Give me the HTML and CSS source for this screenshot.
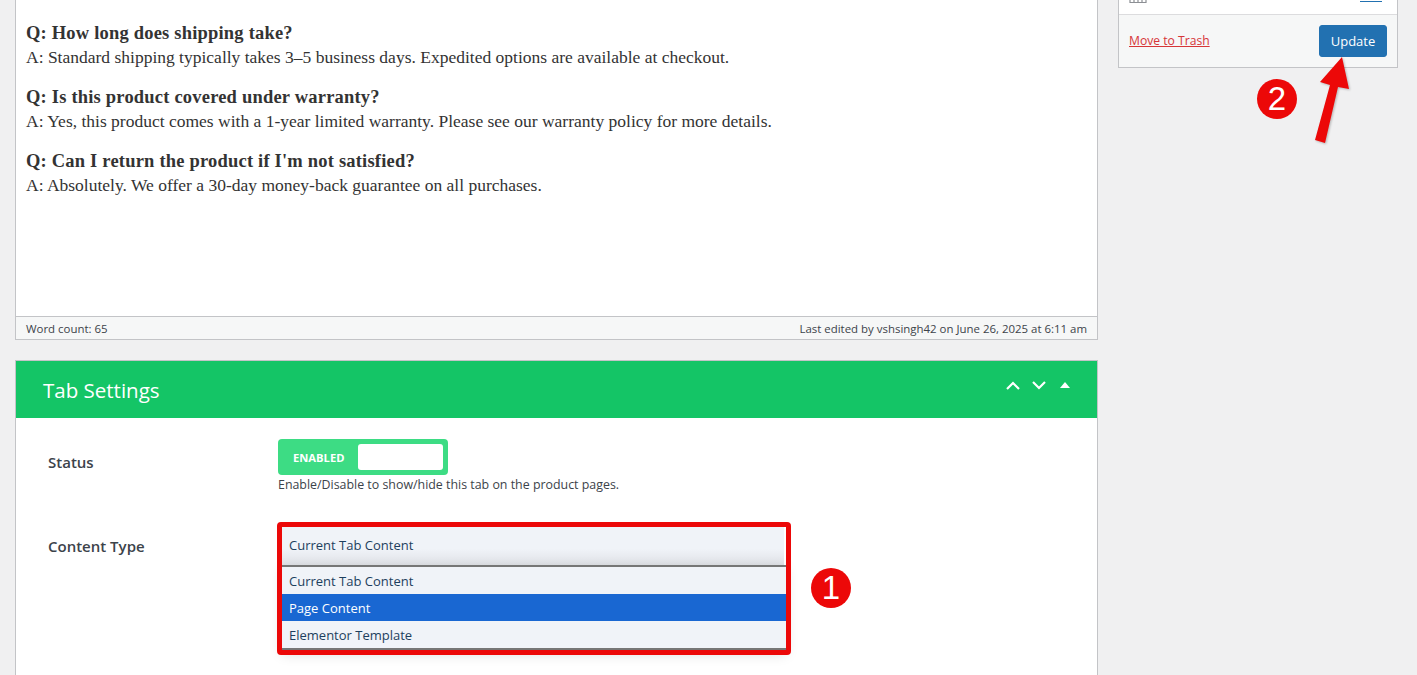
FILE: index.html
```html
<!DOCTYPE html>
<html lang="en">
<head>
<meta charset="utf-8">
<title>Tab Settings</title>
<link rel="stylesheet" href="styles.css">
</head>
<body>
<div class="page">
  <main class="main">
    <section class="editor">
      <div class="editor-content">
        <p class="qa"><strong>Q: How long does shipping take?</strong>A: Standard shipping typically takes 3–5 business days. Expedited options are available at checkout.</p>
        <p class="qa"><strong>Q: Is this product covered under warranty?</strong>A: Yes, this product comes with a 1-year limited warranty. Please see our warranty policy for more details.</p>
        <p class="qa"><strong>Q: Can I return the product if I'm not satisfied?</strong>A: Absolutely. We offer a 30-day money-back guarantee on all purchases.</p>
      </div>
      <div class="status-bar">
        <span>Word count: 65</span>
        <span>Last edited by vshsingh42 on June 26, 2025 at 6:11 am</span>
      </div>
    </section>
    <section class="settings">
      <header class="settings-head">
        <h2>Tab Settings</h2>
        <div class="head-icons">
          <svg width="14" height="9" viewBox="0 0 14 9"><path d="M1 8l6-6 6 6" fill="none" stroke="#fff" stroke-width="2.2"/></svg>
          <svg width="14" height="9" viewBox="0 0 14 9"><path d="M1 1l6 6 6-6" fill="none" stroke="#fff" stroke-width="2.2"/></svg>
          <svg class="head-tri" width="10" height="6" viewBox="0 0 10 6"><path d="M5 0l5 6H0z" fill="#fff"/></svg>
        </div>
      </header>
      <div class="row row-status">
        <div class="label">Status</div>
        <div class="field">
          <div class="toggle"><span class="toggle-text">ENABLED</span><span class="knob"></span></div>
          <p class="help">Enable/Disable to show/hide this tab on the product pages.</p>
        </div>
      </div>
      <div class="row row-type">
        <div class="label">Content Type</div>
        <div class="field">
          <div class="select-current">Current Tab Content</div>
        </div>
      </div>
    </section>
  </main>
  <aside class="side">
    <div class="publish">
      <div class="publish-top">
        <svg class="cal" width="18" height="3" viewBox="0 0 18 3"><path d="M1 0v2.500h16V0M5 0v2M9 0v2M13 0v2" fill="none" stroke="#8c8f94" stroke-width="1.2"/></svg>
        <span class="edit-line"></span>
      </div>
      <div class="publish-actions">
        <a class="trash" href="#">Move to Trash</a>
        <button class="update" type="button">Update</button>
      </div>
    </div>
  </aside>
</div>

<div class="dropdown">
  <div class="opt">Current Tab Content</div>
  <div class="opt opt-active">Page Content</div>
  <div class="opt">Elementor Template</div>
</div>
<div class="red-box"></div>
<div class="badge badge-one">1</div>
<div class="badge badge-two">2</div>
<svg class="arrow" width="40" height="92" viewBox="0 0 40 92">
  <path d="M30 2L8 27 18 30 3 85 13 88 26 32 37 34z" fill="#ec0808"/>
</svg>
</body>
</html>
```

FILE: styles.css
```css
* { box-sizing: border-box; }
html, body { margin: 0; height: 675px; overflow: hidden; }
body {
  background: #f0f0f1;
  color: #3c434a;
  font-family: "Open Sans", "Noto Sans", sans-serif;
  font-size: 13px;
  position: relative;
}
.page { display: flex; gap: 20px; padding-left: 15px; align-items: flex-start; height: 675px; overflow: hidden; }
.main { width: 1083px; display: flex; flex-direction: column; gap: 20px; }
.side { width: 280px; }

.editor { background: #fff; border: 1px solid #c3c4c7; border-top: 0; }
.editor-content {
  height: 316px;
  padding: 21px 10px 0;
  font-family: "Liberation Serif", serif;
  font-size: 17.5px;
  line-height: 24px;
  color: #333;
}
.editor-content strong { display: block; font-size: 18.5px; letter-spacing: .2px; }
.qa { margin: 0 0 16px; }
.status-bar {
  height: 23px;
  display: flex;
  justify-content: space-between;
  align-items: center;
  padding: 0 10px;
  background: #f6f7f7;
  border-top: 1px solid #c3c4c7;
  font-size: 11.45px;
  color: #3c434a;
}

.settings { background: #fff; border: 1px solid #c3c4c7; height: 400px; }
.settings-head {
  height: 57px;
  background: #14c566;
  display: flex;
  justify-content: space-between;
  align-items: center;
  padding: 0 27px;
  color: #fff;
}
.settings-head h2 { margin: 0; font-size: 20.5px; font-weight: 400; }
.head-icons { display: flex; align-items: center; gap: 12px; margin-top: -8px; }
.head-tri { margin-left: 2px; margin-top: -2px; }
.row { display: flex; padding-left: 32px; }
.row-status { padding-top: 21px; height: 105px; }
.label { width: 230px; font-size: 15px; font-weight: 600; color: #3c434a; padding-top: 13px; }
.toggle {
  width: 170px;
  height: 36px;
  background: #3ddc84;
  border-radius: 4px;
  display: flex;
  align-items: center;
  padding: 0 5px 0 15px;
  justify-content: space-between;
}
.toggle-text { color: #fff; font-size: 11.2px; font-weight: 700; }
.knob { width: 85px; height: 26px; background: #fff; border-radius: 3px; }
.help { margin: 1px 0 0; font-size: 12.4px; line-height: 18px; color: #3c434a; }
.select-current {
  width: 506px;
  height: 43px;
  background: linear-gradient(#f0f3f8 60%, #dfe1e6);
  color: #1d3f5e;
  font-size: 13px;
  padding: 13px 11px 0;
}

.dropdown {
  position: absolute;
  left: 282px;
  top: 565px;
  width: 504px;
  height: 85px;
  background: #f0f3f8;
  border-top: 2px solid #767676;
  border-bottom: 2px solid #767676;
  box-shadow: 0 4px 12px rgba(0,0,0,.15);
}
.opt { height: 27px; padding: 1px 7px 0; line-height: 27px; color: #1d3f5e; font-size: 13px; }
.opt-active { background: #1967d2; color: #fff; }
.red-box {
  position: absolute;
  left: 277px;
  top: 522px;
  width: 514px;
  height: 133px;
  border: 5px solid #ec0808;
  border-radius: 4px;
}
.badge {
  position: absolute;
  width: 40px;
  height: 40px;
  border-radius: 50%;
  background: #ec0808;
  color: #fff;
  font-family: "Liberation Sans", sans-serif;
  font-size: 33px;
  line-height: 40px;
  text-align: center;
}
.badge-one { left: 811px; top: 568px; }
.badge-two { left: 1257px; top: 79px; }
.arrow { position: absolute; left: 1312px; top: 55px; filter: drop-shadow(1px 1px 1px rgba(0,0,0,.25)); }

.publish { background: #fff; border: 1px solid #c3c4c7; border-top: 0; }
.publish-top { height: 14px; position: relative; display: flex; justify-content: space-between; align-items: flex-start; padding: 0 15px 0 10px; }
.edit-line { width: 22px; height: 1px; margin-top: 1px; background: #2271b1; }
.publish-actions {
  height: 53px;
  background: #f6f7f7;
  border-top: 1px solid #dcdcde;
  display: flex;
  justify-content: space-between;
  align-items: center;
  padding: 0 10px;
}
.trash { color: #d63638; font-size: 12.15px; text-decoration: underline; margin-top: -2px; }
.update {
  width: 68px;
  height: 32px;
  background: #2271b1;
  border: 1px solid #2271b1;
  border-radius: 3px;
  color: #fff;
  font: 13px "Open Sans", sans-serif;
  padding: 0;
}
```
